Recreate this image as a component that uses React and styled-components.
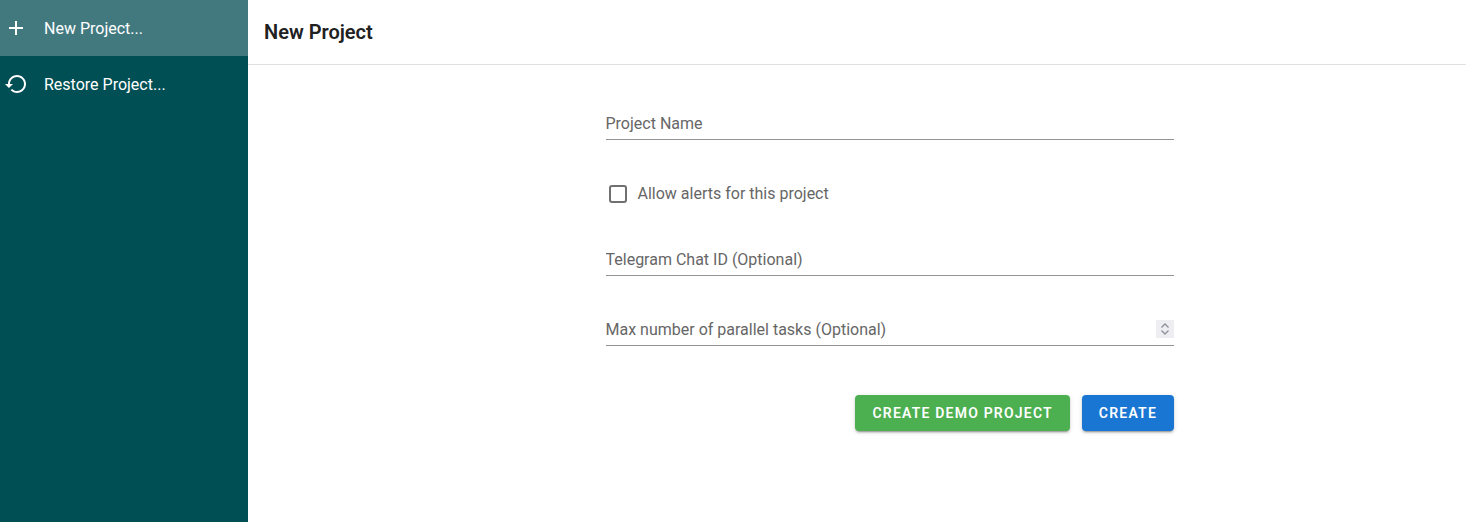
import React from 'react';
import styled, { createGlobalStyle } from 'styled-components';

const GlobalStyle = createGlobalStyle`
  html, body {
    margin: 0;
    padding: 0;
    height: 100%;
    background-color: #FFF;
    font-family: Roboto, "Liberation Sans", sans-serif;
  }

  * {
    box-sizing: border-box;
  }
`;

const Page = styled.div`
  display: flex;
  width: 100%;
  height: 522px;
  overflow: hidden;
`;

const Sidebar = styled.nav`
  display: flex;
  flex-direction: column;
  flex: 0 0 248px;
  background-color: #004f55;
`;

const NavItem = styled.div`
  display: flex;
  align-items: center;
  height: 56px;
  padding: 0 4px;
  color: #FFF;
  font-size: 16px;
  line-height: 24px;
  cursor: pointer;
  background-color: ${(props) => (props.$active ? '#41797f' : 'transparent')};
`;

const NavIcon = styled.svg`
  flex: none;
  width: 24px;
  height: 24px;
  margin-right: 16px;
  fill: #FFF;
`;

const NavLabel = styled.span`
  padding-top: 2px;
`;

const Content = styled.main`
  flex: 1;
  display: flex;
  flex-direction: column;
`;

const Header = styled.header`
  display: flex;
  align-items: center;
  height: 65px;
  padding: 0 16px;
  border-bottom: 1px solid #e0e0e0;
`;

const Title = styled.h1`
  margin: 0;
  font-size: 20px;
  font-weight: 600;
  line-height: 32px;
  color: #212121;
`;

const Form = styled.form`
  display: flex;
  flex-direction: column;
  width: 568.5px;
  margin-left: 357.5px;
  padding-top: 43px;
`;

const FieldWrap = styled.div`
  position: relative;
  margin-bottom: 38px;
`;

const Field = styled.input`
  display: block;
  width: 100%;
  height: 32px;
  padding: 0 0 1px;
  border: none;
  border-bottom: 1px solid #949494;
  border-radius: 0;
  outline: none;
  background: transparent;
  font-family: inherit;
  font-size: 16px;
  color: #212121;
  appearance: textfield;

  &::placeholder {
    color: #666;
    opacity: 1;
  }

  &::-webkit-inner-spin-button {
    appearance: none;
    margin: 0;
  }
`;

const Spinner = styled.svg`
  position: absolute;
  top: 6px;
  right: 0;
  width: 18px;
  height: 18px;
  background-color: #ededf2;
`;

const CheckRow = styled.label`
  display: flex;
  align-items: center;
  height: 28px;
  margin-bottom: 38px;
  padding-top: 4px;
  font-size: 16px;
  line-height: 24px;
  color: #666;
`;

const CheckBox = styled.span`
  flex: none;
  width: 18px;
  height: 18px;
  margin: 0 11px 0 3px;
  border: 2px solid #707070;
  border-radius: 3px;
`;

const Actions = styled.div`
  display: flex;
  justify-content: flex-end;
  gap: 12px;
  margin-top: 11px;
`;

const Button = styled.button`
  height: 36px;
  padding: 0 17px;
  border: none;
  border-radius: 4px;
  background-color: ${(props) => props.$color};
  color: #FFF;
  font-family: inherit;
  font-size: 14px;
  font-weight: 600;
  letter-spacing: 1.2px;
  text-transform: uppercase;
  cursor: pointer;
  box-shadow: 0 3px 1px -2px rgba(0, 0, 0, 0.2), 0 2px 2px 0 rgba(0, 0, 0, 0.14), 0 1px 5px 0 rgba(0, 0, 0, 0.12);
`;

const App = () => {
  return (
    <Page>
      <GlobalStyle />
      <Sidebar>
        <NavItem $active>
          <NavIcon viewBox="0 0 24 24">
            <path d="M19 13h-6v6h-2v-6H5v-2h6V5h2v6h6v2z" />
          </NavIcon>
          <NavLabel>New Project...</NavLabel>
        </NavItem>
        <NavItem>
          <NavIcon viewBox="0 0 24 24">
            <path d="M13 3c-4.97 0-9 4.03-9 9H1l3.89 3.89.07.14L9 12H6c0-3.87 3.13-7 7-7s7 3.13 7 7-3.13 7-7 7c-1.93 0-3.68-.79-4.94-2.06l-1.42 1.42C8.27 19.99 10.51 21 13 21c4.97 0 9-4.03 9-9s-4.03-9-9-9z" />
          </NavIcon>
          <NavLabel>Restore Project...</NavLabel>
        </NavItem>
      </Sidebar>
      <Content>
        <Header>
          <Title>New Project</Title>
        </Header>
        <Form onSubmit={(e) => e.preventDefault()}>
          <FieldWrap>
            <Field type="text" placeholder="Project Name" />
          </FieldWrap>
          <CheckRow>
            <CheckBox />
            Allow alerts for this project
          </CheckRow>
          <FieldWrap>
            <Field type="text" placeholder="Telegram Chat ID (Optional)" />
          </FieldWrap>
          <FieldWrap>
            <Field type="number" placeholder="Max number of parallel tasks (Optional)" />
            <Spinner viewBox="0 0 18 18">
              <path d="M5.5 7.5 9 4l3.5 3.5M5.5 10.5 9 14l3.5-3.5" fill="none" stroke="#8f8f9a" strokeWidth="1.3" />
            </Spinner>
          </FieldWrap>
          <Actions>
            <Button type="button" $color="#4caf50">Create Demo Project</Button>
            <Button type="submit" $color="#1976d2">Create</Button>
          </Actions>
        </Form>
      </Content>
    </Page>
  );
};

export default App;
